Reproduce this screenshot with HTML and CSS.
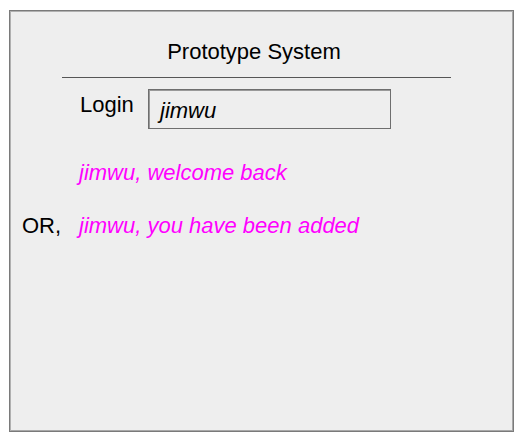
FILE: index.html
```html
<!DOCTYPE html>
<html>
<head>
<meta charset="utf-8">
<link rel="stylesheet" href="styles.css">
</head>
<body>
<div class="frame">
  <div class="header">
    <div class="title">Prototype System</div>
    <div class="rule"></div>
  </div>
  <div class="login-row">
    <span class="label">Login</span>
    <div class="input">jimwu</div>
  </div>
  <div class="msg-row first">
    <span class="or"></span>
    <span class="msg">jimwu, welcome back</span>
  </div>
  <div class="msg-row second">
    <span class="or">OR,</span>
    <span class="msg">jimwu, you have been added</span>
  </div>
</div>
</body>
</html>
```
FILE: styles.css
```css
html, body {
  margin: 0;
  padding: 0;
  background: #ffffff;
}
body {
  font-family: "Liberation Sans", Arial, sans-serif;
  color: #000;
}
.frame {
  margin: 10px 0 0 9px;
  width: 505px;
  height: 422px;
  box-sizing: border-box;
  border: 1px solid #7a7a7a;
  box-shadow: inset 1px 1px 0 #b0b0b0, inset -1px -1px 0 #a8a8a8;
  background: #eeeeee;
  display: flex;
  flex-direction: column;
}
.header {
  margin: 28px 0 0 52px;
  width: 389px;
}
.title {
  font-size: 22px;
  line-height: 26px;
  text-align: center;
  padding-right: 5px;
}
.rule {
  margin-top: 12px;
  height: 1px;
  background: #555;
}
.login-row {
  display: flex;
  align-items: flex-start;
  margin: 11px 0 0 70px;
}
.label {
  font-size: 22px;
  line-height: 26px;
  margin-top: 3px;
  width: 68px;
}
.input {
  width: 243px;
  height: 40px;
  box-sizing: border-box;
  border: 1px solid #6e6e6e;
  box-shadow: inset 1px 1px 0 #999;
  font-size: 22px;
  font-style: italic;
  line-height: 26px;
  padding: 8px 0 0 11px;
}
.msg-row {
  display: flex;
  font-size: 22px;
  line-height: 26px;
}
.msg-row.first {
  margin-top: 31px;
}
.msg-row.second {
  margin-top: 27px;
}
.or {
  width: 57px;
  margin-left: 12px;
}
.msg {
  color: #ff00ff;
  font-style: italic;
}
```
